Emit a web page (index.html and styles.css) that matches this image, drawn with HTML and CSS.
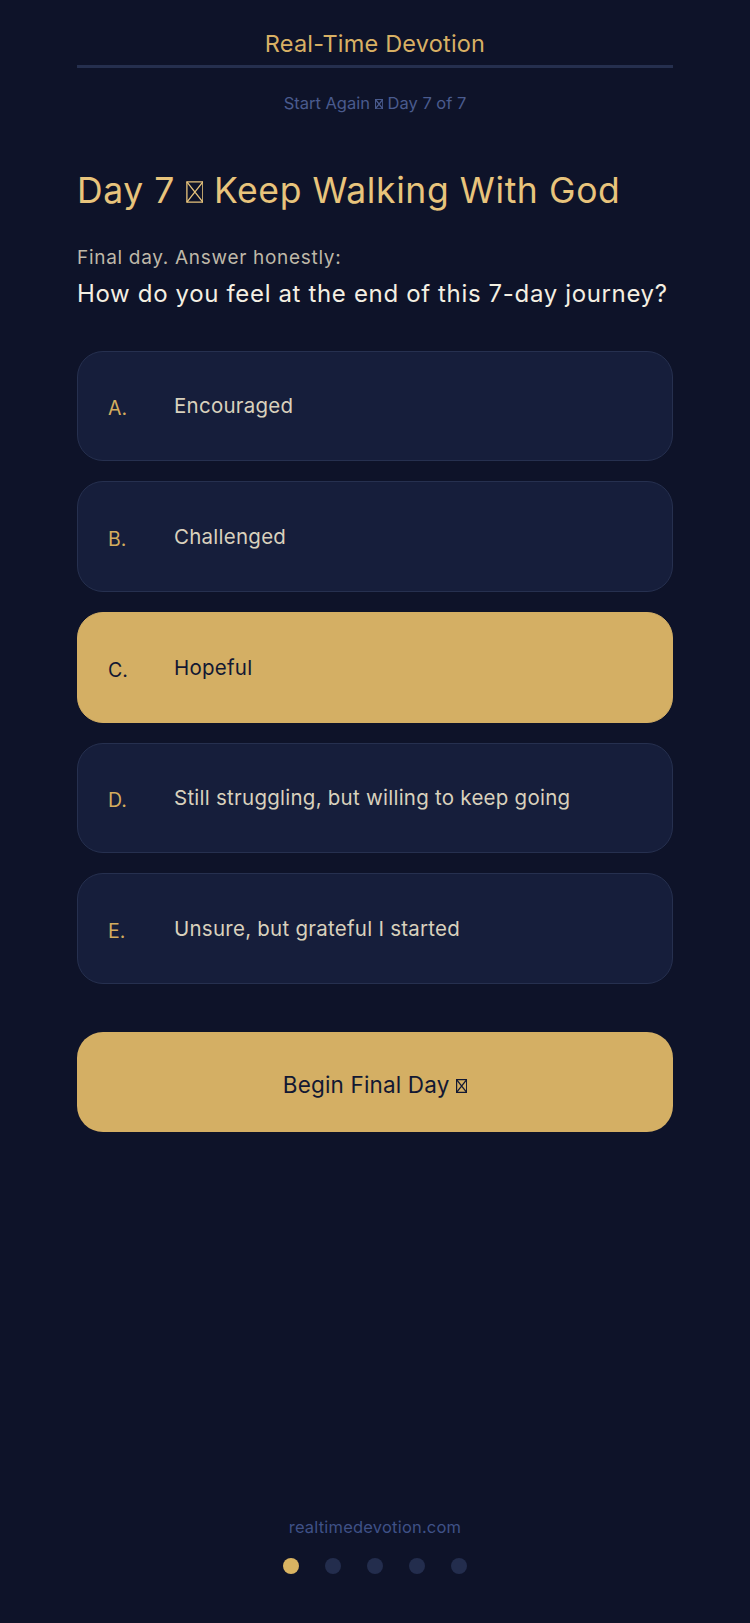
FILE: index.html
```html
<!DOCTYPE html>
<html lang="en">
<head>
<meta charset="utf-8">
<title>Real-Time Devotion</title>
<link rel="stylesheet" href="styles.css">
</head>
<body>
<div class="page">
  <header class="top">
    <div class="brand">Real-Time Devotion</div>
    <div class="progress">Start Again <svg class="tofu" viewBox="0 0 10 12" preserveAspectRatio="none" aria-hidden="true"><rect x="0.5" y="0.5" width="9" height="11"/><path d="M0.5 0.5L9.5 11.5M9.5 0.5L0.5 11.5"/></svg> Day 7 of 7</div>
  </header>

  <main class="content">
    <h1 class="day-title">Day 7 <svg class="tofu" viewBox="0 0 10 12" preserveAspectRatio="none" aria-hidden="true"><rect x="0.5" y="0.5" width="9" height="11"/><path d="M0.5 0.5L9.5 11.5M9.5 0.5L0.5 11.5"/></svg> Keep Walking With God</h1>
    <p class="prompt">Final day. Answer honestly:</p>
    <p class="question">How do you feel at the end of this 7-day journey?</p>

    <div class="options">
      <div class="option"><span class="letter">A.</span><span class="label">Encouraged</span></div>
      <div class="option"><span class="letter">B.</span><span class="label">Challenged</span></div>
      <div class="option selected"><span class="letter">C.</span><span class="label">Hopeful</span></div>
      <div class="option"><span class="letter">D.</span><span class="label">Still struggling, but willing to keep going</span></div>
      <div class="option"><span class="letter">E.</span><span class="label">Unsure, but grateful I started</span></div>
    </div>

    <button class="cta" type="button">Begin Final Day <svg class="tofu" viewBox="0 0 10 12" preserveAspectRatio="none" aria-hidden="true"><rect x="0.5" y="0.5" width="9" height="11"/><path d="M0.5 0.5L9.5 11.5M9.5 0.5L0.5 11.5"/></svg></button>
  </main>

  <footer class="foot">
    <div class="site">realtimedevotion.com</div>
    <div class="dots">
      <span class="dot active"></span>
      <span class="dot"></span>
      <span class="dot"></span>
      <span class="dot"></span>
      <span class="dot"></span>
    </div>
  </footer>
</div>
</body>
</html>
```

FILE: styles.css
```css
* { box-sizing: border-box; }

html, body {
  margin: 0;
  padding: 0;
  background: #0e1329;
}

body {
  font-family: Inter, "Noto Sans", sans-serif;
  color: #f2ecdd;
}

.page {
  min-height: 1623px;
  padding: 0 77px;
  display: flex;
  flex-direction: column;
}

/* missing-glyph box used where the font has no symbol */
.tofu {
  display: inline-block;
  width: 0.5em;
  height: 0.62em;
  vertical-align: baseline;
  fill: none;
  stroke: currentColor;
}

.tofu rect,
.tofu path {
  vector-effect: non-scaling-stroke;
  stroke-width: 1.3px;
}

/* header */
.top {
  display: flex;
  flex-direction: column;
  align-items: stretch;
  padding-top: 28.5px;
}

.brand {
  font-size: 23.5px;
  letter-spacing: 0.2px;
  line-height: 30px;
  color: #d8b064;
  text-align: center;
  padding-bottom: 6.5px;
  border-bottom: 3px solid #252f4e;
}

.progress {
  margin-top: 24px;
  font-size: 16.5px;
  line-height: 22px;
  color: #4a5b8e;
  text-align: center;
}

/* question block */
.content {
  display: flex;
  flex-direction: column;
}

.day-title {
  margin: 55px 0 0;
  font-weight: 400;
  font-size: 35.5px;
  letter-spacing: 0.6px;
  line-height: 44px;
  color: #e8c47c;
}

.prompt {
  margin: 32.5px 0 0;
  font-size: 19px;
  letter-spacing: 0.7px;
  line-height: 24px;
  color: #bfb8a8;
}

.question {
  margin: 9px 0 0;
  font-size: 24px;
  letter-spacing: 0.65px;
  line-height: 30px;
  color: #f4efe2;
}

/* answer cards */
.options {
  margin-top: 42px;
  display: flex;
  flex-direction: column;
  gap: 20px;
}

.option {
  height: 110.7px;
  display: flex;
  align-items: center;
  padding: 0 20px 0 30px;
  background: #161e3b;
  border: 1px solid #26304f;
  border-radius: 26px;
}

.letter {
  width: 66px;
  flex: none;
  font-size: 19.5px;
  color: #d4ad5e;
  padding-top: 5px;
}

.label {
  font-size: 20.5px;
  letter-spacing: 0.25px;
  color: #d9d1bd;
}

.option.selected {
  background: #d4af64;
  border-color: #d4af64;
}

.option.selected .letter,
.option.selected .label {
  color: #121833;
}

/* main action */
.cta {
  margin-top: 48px;
  height: 100.5px;
  border: 0;
  border-radius: 26px;
  background: #d4af64;
  color: #121833;
  font-family: inherit;
  font-size: 22.5px;
  letter-spacing: 0.15px;
  padding: 4px 0 0;
}

/* footer */
.foot {
  margin-top: auto;
  padding-bottom: 49px;
  display: flex;
  flex-direction: column;
  align-items: center;
}

.site {
  font-size: 16.5px;
  letter-spacing: 0.2px;
  line-height: 20px;
  color: #3f5187;
}

.dots {
  margin-top: 21px;
  display: flex;
  gap: 26px;
}

.dot {
  width: 16px;
  height: 16px;
  border-radius: 50%;
  background: #232d4d;
}

.dot.active {
  background: #d9b462;
}
```
